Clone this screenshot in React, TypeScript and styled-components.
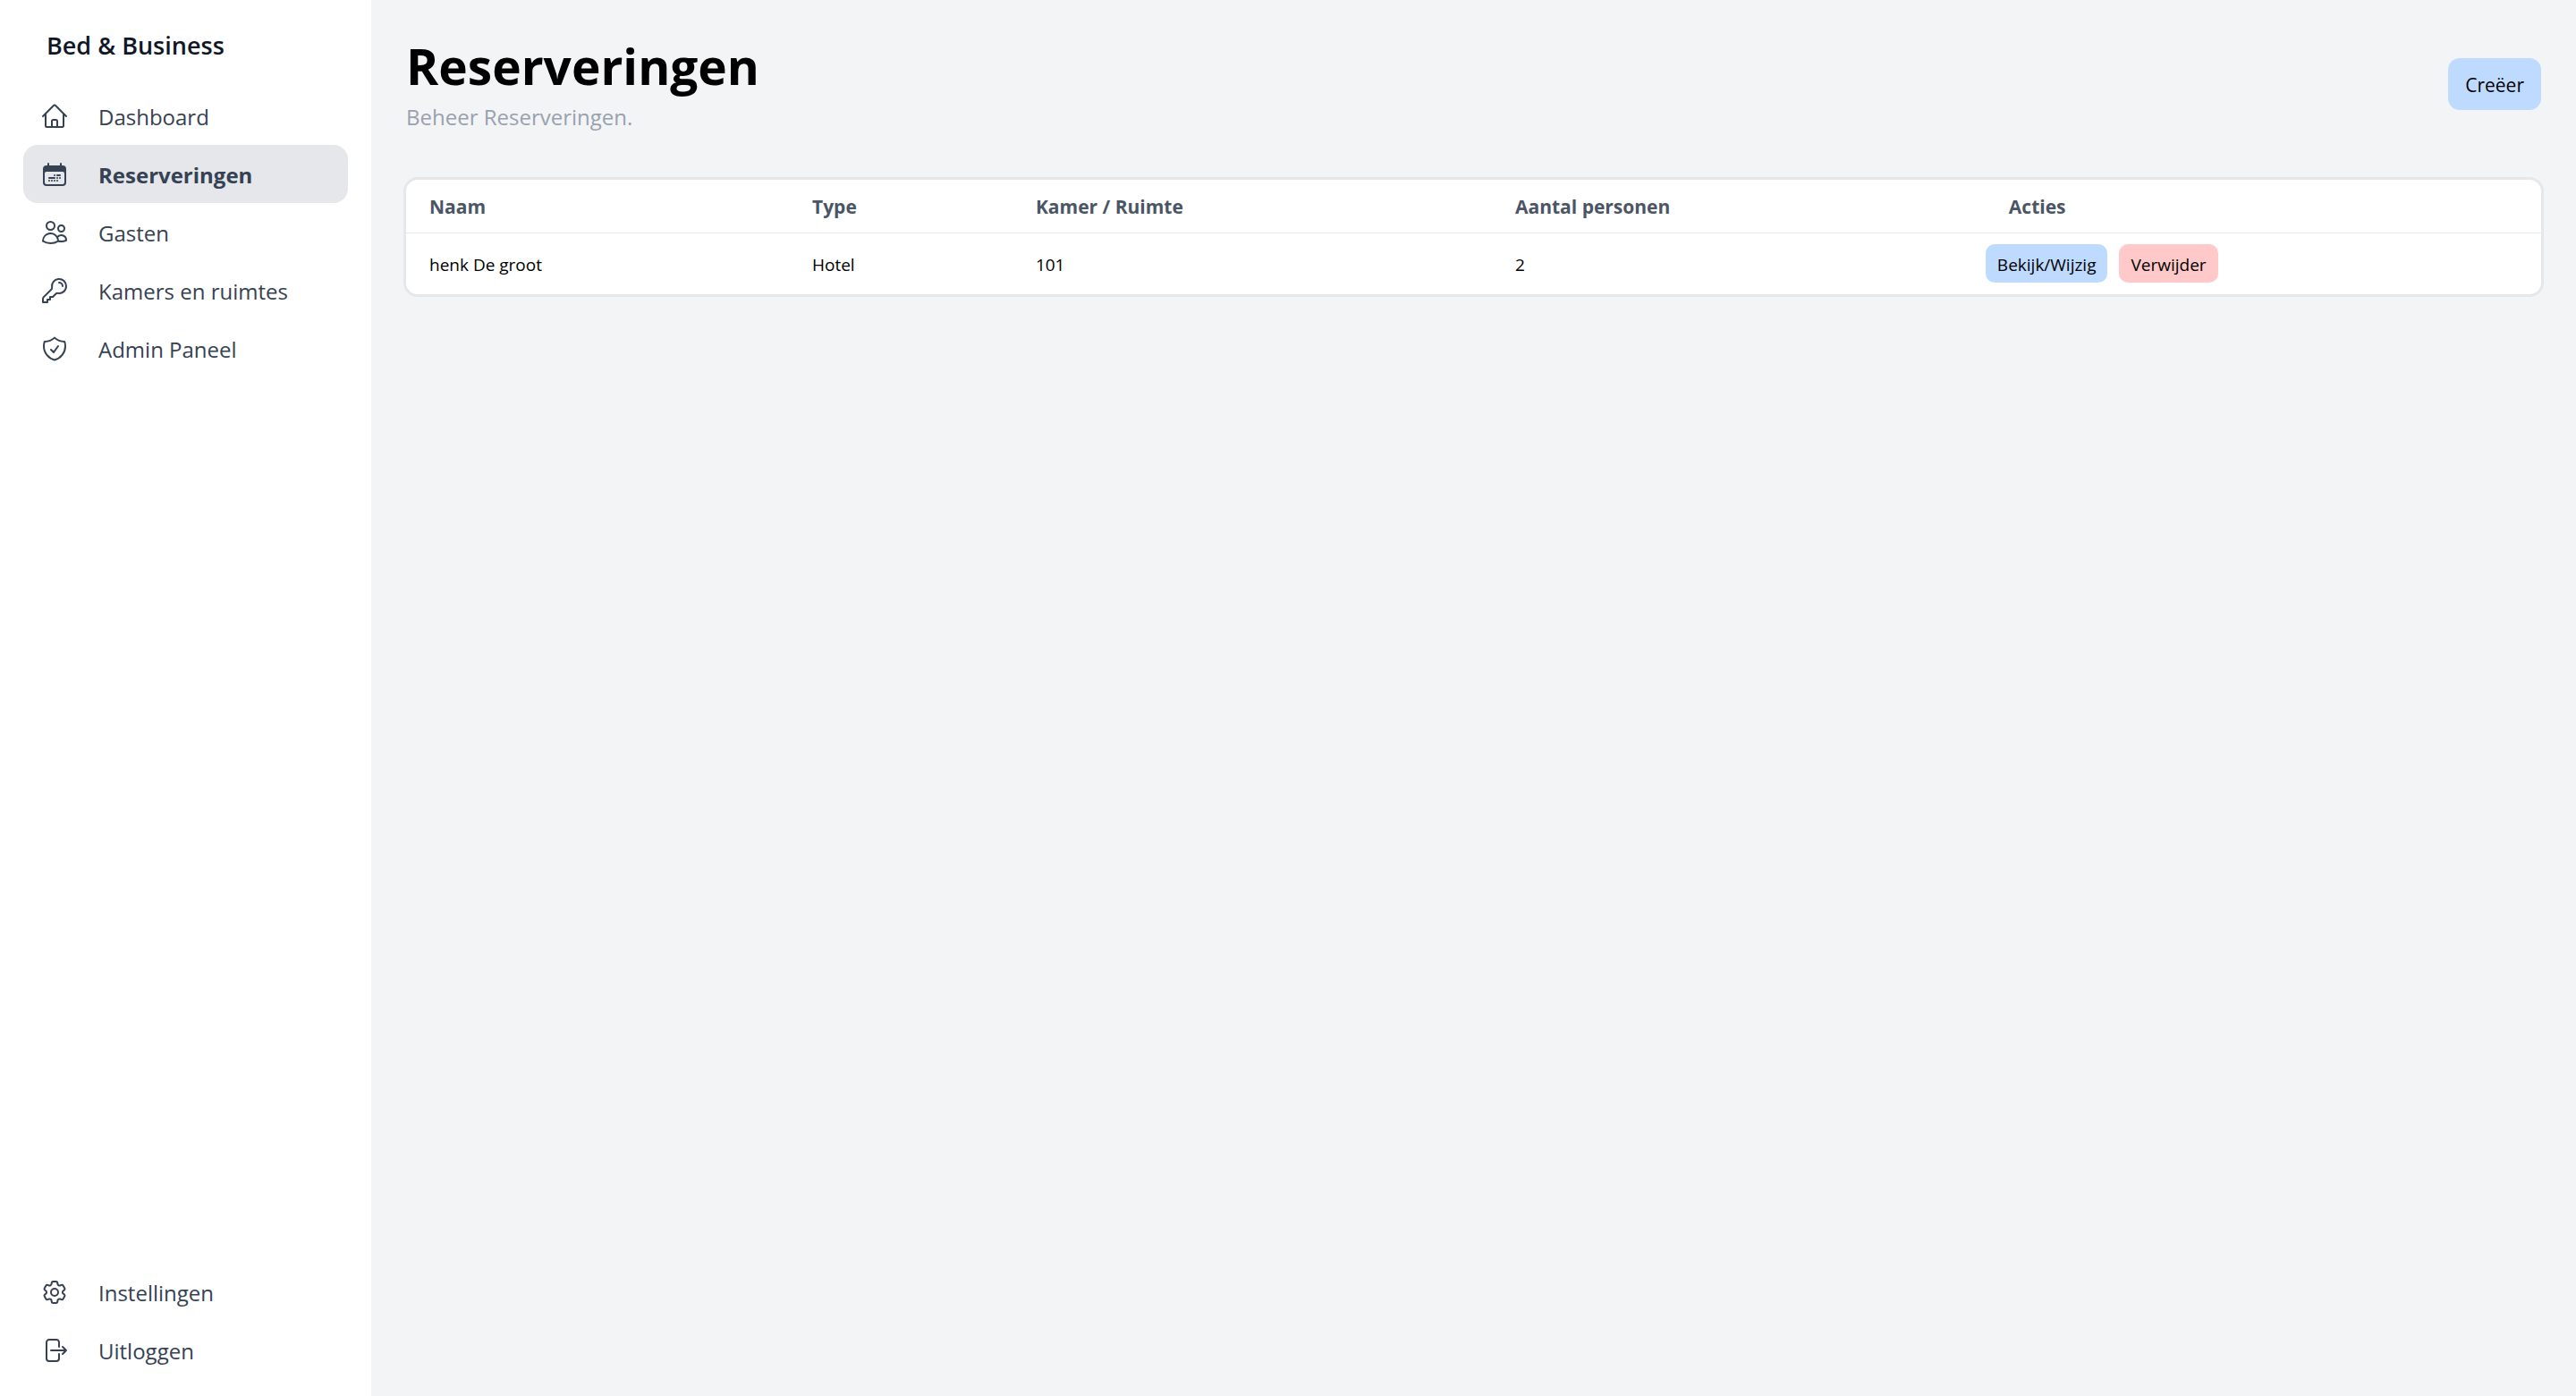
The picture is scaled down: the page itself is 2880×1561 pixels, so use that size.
import React from "react";
import styled, { createGlobalStyle, css } from "styled-components";
import {
  HiOutlineHome,
  HiOutlineUsers,
  HiOutlineKey,
  HiOutlineShieldCheck,
  HiOutlineCog6Tooth,
  HiOutlineArrowRightOnRectangle,
} from "react-icons/hi2";

const color = {
  page: "#f3f4f6",
  surface: "#ffffff",
  line: "#e5e7eb",
  brand: "#101828",
  nav: "#364153",
  heading: "#4a5565",
  muted: "#99a1af",
  blue: "#bedbff",
  red: "#ffc9c9",
};

const GlobalStyle = createGlobalStyle`
  *, *::before, *::after { box-sizing: border-box; }
  body {
    margin: 0;
    background: ${color.page};
    color: #000;
    font-family: "Segoe UI", "Open Sans", "Noto Sans", sans-serif;
  }
`;

const Shell = styled.div`
  display: flex;
  min-height: 100vh;
`;

const Sidebar = styled.aside`
  display: flex;
  flex-direction: column;
  flex: none;
  width: 415px;
  padding: 26px 26px 19px;
  background: ${color.surface};
`;

const Brand = styled.div`
  margin-bottom: 21px;
  padding: 0 26px;
  color: ${color.brand};
  font-size: 27px;
  font-weight: 600;
  line-height: 50px;
`;

const Nav = styled.nav`
  display: flex;
  flex-direction: column;
  flex: 1;
`;

const Spacer = styled.div`
  flex: 1;
`;

const NavLink = styled.a<{ $active?: boolean }>`
  display: flex;
  align-items: center;
  gap: 33px;
  height: 65px;
  padding: 0 19px;
  border-radius: 16px;
  color: ${color.nav};
  font-size: 24px;
  line-height: 40px;
  text-decoration: none;
  white-space: nowrap;
  ${(p) =>
    p.$active &&
    css`
      background: ${color.line};
      font-weight: 700;
    `}

  svg {
    flex: none;
    width: 32px;
    height: 32px;
  }
`;

const NavLabel = styled.span`
  padding-top: 2px;
`;

const Main = styled.main`
  flex: 1;
  min-width: 0;
  padding: 39px 36px;
`;

const Header = styled.header`
  display: flex;
  align-items: center;
  justify-content: space-between;
  margin-bottom: 49px;
  padding: 0 3px;
`;

const Title = styled.h1`
  margin: 0;
  font-size: 55px;
  font-weight: 700;
  line-height: 70px;
`;

const Subtitle = styled.p`
  margin: 4px 0 0;
  color: ${color.muted};
  font-size: 24px;
  line-height: 36px;
`;

const Button = styled.button<{ $tone: string; $large?: boolean }>`
  height: ${(p) => (p.$large ? 58 : 43)}px;
  padding: 2px ${(p) => (p.$large ? 19 : 13)}px 0;
  border: 0;
  border-radius: ${(p) => (p.$large ? 13 : 10)}px;
  background: ${(p) => p.$tone};
  color: #000;
  font-family: inherit;
  font-size: ${(p) => (p.$large ? 21 : 19)}px;
  white-space: nowrap;
  cursor: pointer;
`;

const Card = styled.section`
  overflow: hidden;
  border: 3px solid ${color.line};
  border-radius: 16px;
  background: ${color.surface};
`;

const Table = styled.table`
  width: 100%;
  border-collapse: collapse;
  table-layout: fixed;
  text-align: left;
`;

const HeadCell = styled.th<{ $width: string }>`
  width: ${(p) => p.$width};
  height: 59px;
  padding: 2px 26px 0;
  border-bottom: 1px solid ${color.line};
  color: ${color.heading};
  font-size: 21px;
  font-weight: 700;
`;

const Cell = styled.td`
  height: 69px;
  padding: 2px 26px 0;
  font-size: 19px;
`;

const ActionCell = styled(Cell)`
  padding: 0;
`;

const Actions = styled.div`
  display: flex;
  gap: 13px;
`;

const CalendarIcon = () => (
  <svg
    viewBox="0 0 24 24"
    fill="none"
    stroke="currentColor"
    strokeWidth="1.5"
    strokeLinecap="round"
    strokeLinejoin="round"
    aria-hidden="true"
  >
    <path
      fill="currentColor"
      stroke="none"
      d="M2.998 11.242V7.491a2.25 2.25 0 0 1 2.25-2.25h13.5a2.25 2.25 0 0 1 2.25 2.25v3.751a2.25 2.25 0 0 0-2.25-2.25h-13.5a2.25 2.25 0 0 0-2.25 2.25Z"
    />
    <path d="M6.75 2.994v2.25m10.5-2.25v2.25m-14.252 13.5V7.491a2.25 2.25 0 0 1 2.25-2.25h13.5a2.25 2.25 0 0 1 2.25 2.25v11.251m-18 0a2.25 2.25 0 0 0 2.25 2.25h13.5a2.25 2.25 0 0 0 2.25-2.25m-18 0v-7.5a2.25 2.25 0 0 1 2.25-2.25h13.5a2.25 2.25 0 0 1 2.25 2.25v7.5m-6.75-6h2.25m-9 2.25h4.5m.002-2.25h.005v.006H12v-.006Zm-.001 4.5h.006v.006h-.006v-.005Zm-2.25.001h.005v.006H9.75v-.006Zm-2.25 0h.005v.005h-.006v-.005Zm6.75-2.247h.005v.005h-.005v-.005Zm0 2.247h.006v.006h-.006v-.006Zm2.25-2.248h.006V15H16.5v-.005Z" />
  </svg>
);

const mainLinks = [
  { label: "Dashboard", Icon: HiOutlineHome },
  { label: "Reserveringen", Icon: CalendarIcon, active: true },
  { label: "Gasten", Icon: HiOutlineUsers },
  { label: "Kamers en ruimtes", Icon: HiOutlineKey },
  { label: "Admin Paneel", Icon: HiOutlineShieldCheck },
];

const accountLinks = [
  { label: "Instellingen", Icon: HiOutlineCog6Tooth },
  { label: "Uitloggen", Icon: HiOutlineArrowRightOnRectangle },
];

const columns = [
  { label: "Naam", width: "17.93%" },
  { label: "Type", width: "10.47%" },
  { label: "Kamer / Ruimte", width: "22.46%" },
  { label: "Aantal personen", width: "23.12%" },
  { label: "Acties", width: "auto" },
];

const reservations = [
  { name: "henk De groot", type: "Hotel", room: "101", guests: 2 },
];

export default function App() {
  return (
    <>
      <GlobalStyle />
      <Shell>
        <Sidebar>
          <Brand>Bed &amp; Business</Brand>
          <Nav>
            {mainLinks.map(({ label, Icon, active }) => (
              <NavLink
                key={label}
                href="#"
                $active={active}
                aria-current={active ? "page" : undefined}
              >
                <Icon />
                <NavLabel>{label}</NavLabel>
              </NavLink>
            ))}
            <Spacer />
            {accountLinks.map(({ label, Icon }) => (
              <NavLink key={label} href="#">
                <Icon />
                <NavLabel>{label}</NavLabel>
              </NavLink>
            ))}
          </Nav>
        </Sidebar>
        <Main>
          <Header>
            <div>
              <Title>Reserveringen</Title>
              <Subtitle>Beheer Reserveringen.</Subtitle>
            </div>
            <Button type="button" $tone={color.blue} $large>
              Creëer
            </Button>
          </Header>
          <Card>
            <Table>
              <thead>
                <tr>
                  {columns.map((c) => (
                    <HeadCell key={c.label} scope="col" $width={c.width}>
                      {c.label}
                    </HeadCell>
                  ))}
                </tr>
              </thead>
              <tbody>
                {reservations.map((r) => (
                  <tr key={r.name}>
                    <Cell>{r.name}</Cell>
                    <Cell>{r.type}</Cell>
                    <Cell>{r.room}</Cell>
                    <Cell>{r.guests}</Cell>
                    <ActionCell>
                      <Actions>
                        <Button type="button" $tone={color.blue}>
                          Bekijk/Wijzig
                        </Button>
                        <Button type="button" $tone={color.red}>
                          Verwijder
                        </Button>
                      </Actions>
                    </ActionCell>
                  </tr>
                ))}
              </tbody>
            </Table>
          </Card>
        </Main>
      </Shell>
    </>
  );
}
